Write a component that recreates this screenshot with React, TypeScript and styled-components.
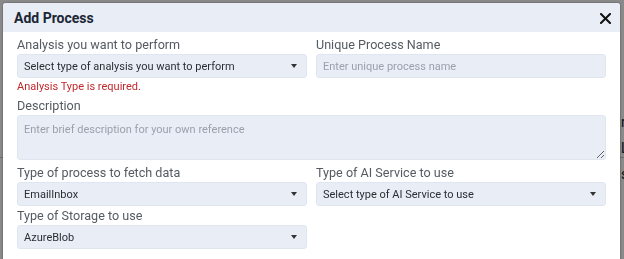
import React from "react";
import styled, { createGlobalStyle } from "styled-components";

const Global = createGlobalStyle`
  html, body { margin: 0; padding: 0; }
  body {
    width: 624px;
    height: 259px;
    overflow: hidden;
    background: #ffffff;
    font-family: Roboto, "Liberation Sans", Arial, sans-serif;
  }
  * { box-sizing: border-box; }
`;

const Page = styled.div`
  width: 624px;
  height: 259px;
  padding-top: 114px;
  display: flex;
  flex-direction: column;
  gap: 8px;
  font-size: 14px;
  color: #222222;
`;

const PageRow = styled.div<{ $line?: boolean }>`
  display: flex;
  justify-content: space-between;
  height: 18px;
  border-bottom: ${(p) => (p.$line ? "1px solid #cccccc" : "none")};
`;

const PageLeft = styled.span`
  margin-left: -40px;
  color: #222222;
`;

const PageRight = styled.span`
  margin-right: -40px;
  width: 43px;
  overflow: hidden;
  white-space: nowrap;
  color: #222222;
`;

const Overlay = styled.div`
  position: fixed;
  inset: 0;
  background: rgba(0, 0, 0, 0.46);
`;

const Modal = styled.div`
  position: fixed;
  top: 3px;
  left: 3px;
  width: 617px;
  height: 280px;
  background: #ffffff;
  border-radius: 3px;
  box-shadow: 0 0 2px rgba(0, 0, 0, 0.55);
  overflow: hidden;
`;

const Header = styled.div`
  height: 29px;
  background: #e9edf5;
  display: flex;
  align-items: center;
  justify-content: space-between;
  padding: 0 9px 0 11px;
`;

const Title = styled.h2`
  margin: 0;
  font-size: 14px;
  font-weight: 700;
  color: #1b2635;
  line-height: 18px;
`;

const Close = styled.button`
  border: 0;
  background: none;
  padding: 0;
  width: 12px;
  height: 12px;
  display: flex;
  align-items: center;
  justify-content: center;
  cursor: pointer;
  margin-top: 2px;
`;

const Body = styled.div`
  padding: 5px 14px 0 14px;
  display: grid;
  grid-template-columns: 1fr 1fr;
  column-gap: 9px;
`;

const Field = styled.div<{ $span?: boolean; $gap?: number }>`
  display: flex;
  flex-direction: column;
  grid-column: ${(p) => (p.$span ? "1 / span 2" : "auto")};
  margin-bottom: ${(p) => p.$gap ?? 2}px;
`;

const Label = styled.label`
  font-size: 12.6px;
  line-height: 15px;
  color: #555b63;
  margin-bottom: 2px;
`;

const SelectBox = styled.div`
  height: 24px;
  background: #e8edf6;
  border: 1px solid #e0e6f0;
  border-radius: 3px;
  display: flex;
  align-items: center;
  justify-content: space-between;
  padding: 0 9px 0 6px;
  font-size: 11px;
  color: #2b2f35;
`;

const Arrow = styled.span`
  width: 0;
  height: 0;
  border-left: 3px solid transparent;
  border-right: 3px solid transparent;
  border-top: 4px solid #333333;
`;

const Input = styled.input`
  height: 24px;
  background: #e8edf6;
  border: 1px solid #e0e6f0;
  border-radius: 3px;
  padding: 0 6px;
  font-family: inherit;
  font-size: 11px;
  color: #2b2f35;
  outline: none;
  &::placeholder { color: #9ba1ab; }
`;

const TextArea = styled.textarea`
  display: block;
  height: 45px;
  background: #e8edf6;
  border: 1px solid #e0e6f0;
  border-radius: 3px;
  padding: 7px 6px;
  font-family: inherit;
  font-size: 11px;
  line-height: 14px;
  color: #2b2f35;
  resize: vertical;
  outline: none;
  &::placeholder { color: #9ba1ab; }
`;

const ErrorText = styled.div`
  font-size: 11px;
  line-height: 16px;
  color: #c0282d;
  margin: 1px 0 1px;
`;

const Select = ({ value }: { value: string }) => (
  <SelectBox>
    <span>{value}</span>
    <Arrow />
  </SelectBox>
);

export default function App() {
  return (
    <>
      <Global />
      <Page>
        <PageRow>
          <PageLeft>Name</PageLeft>
          <PageRight>ro</PageRight>
        </PageRow>
        <PageRow $line>
          <PageLeft></PageLeft>
          <PageRight>Lo</PageRight>
        </PageRow>
        <PageRow>
          <PageLeft></PageLeft>
          <PageRight>sa</PageRight>
        </PageRow>
      </Page>
      <Overlay />
      <Modal>
        <Header>
          <Title>Add Process</Title>
          <Close aria-label="Close">
            <svg width="11" height="11" viewBox="0 0 11 11">
              <path d="M1 1 L10 10 M10 1 L1 10" stroke="#111" strokeWidth="2" strokeLinecap="square" />
            </svg>
          </Close>
        </Header>
        <Body>
          <Field>
            <Label>Analysis you want to perform</Label>
            <Select value="Select type of analysis you want to perform" />
            <ErrorText>Analysis Type is required.</ErrorText>
          </Field>
          <Field>
            <Label>Unique Process Name</Label>
            <Input placeholder="Enter unique process name" />
          </Field>
          <Field $span $gap={5}>
            <Label>Description</Label>
            <TextArea placeholder="Enter brief description for your own reference" />
          </Field>
          <Field>
            <Label>Type of process to fetch data</Label>
            <Select value="EmailInbox" />
          </Field>
          <Field>
            <Label>Type of AI Service to use</Label>
            <Select value="Select type of AI Service to use" />
          </Field>
          <Field>
            <Label>Type of Storage to use</Label>
            <Select value="AzureBlob" />
          </Field>
        </Body>
      </Modal>
    </>
  );
}
